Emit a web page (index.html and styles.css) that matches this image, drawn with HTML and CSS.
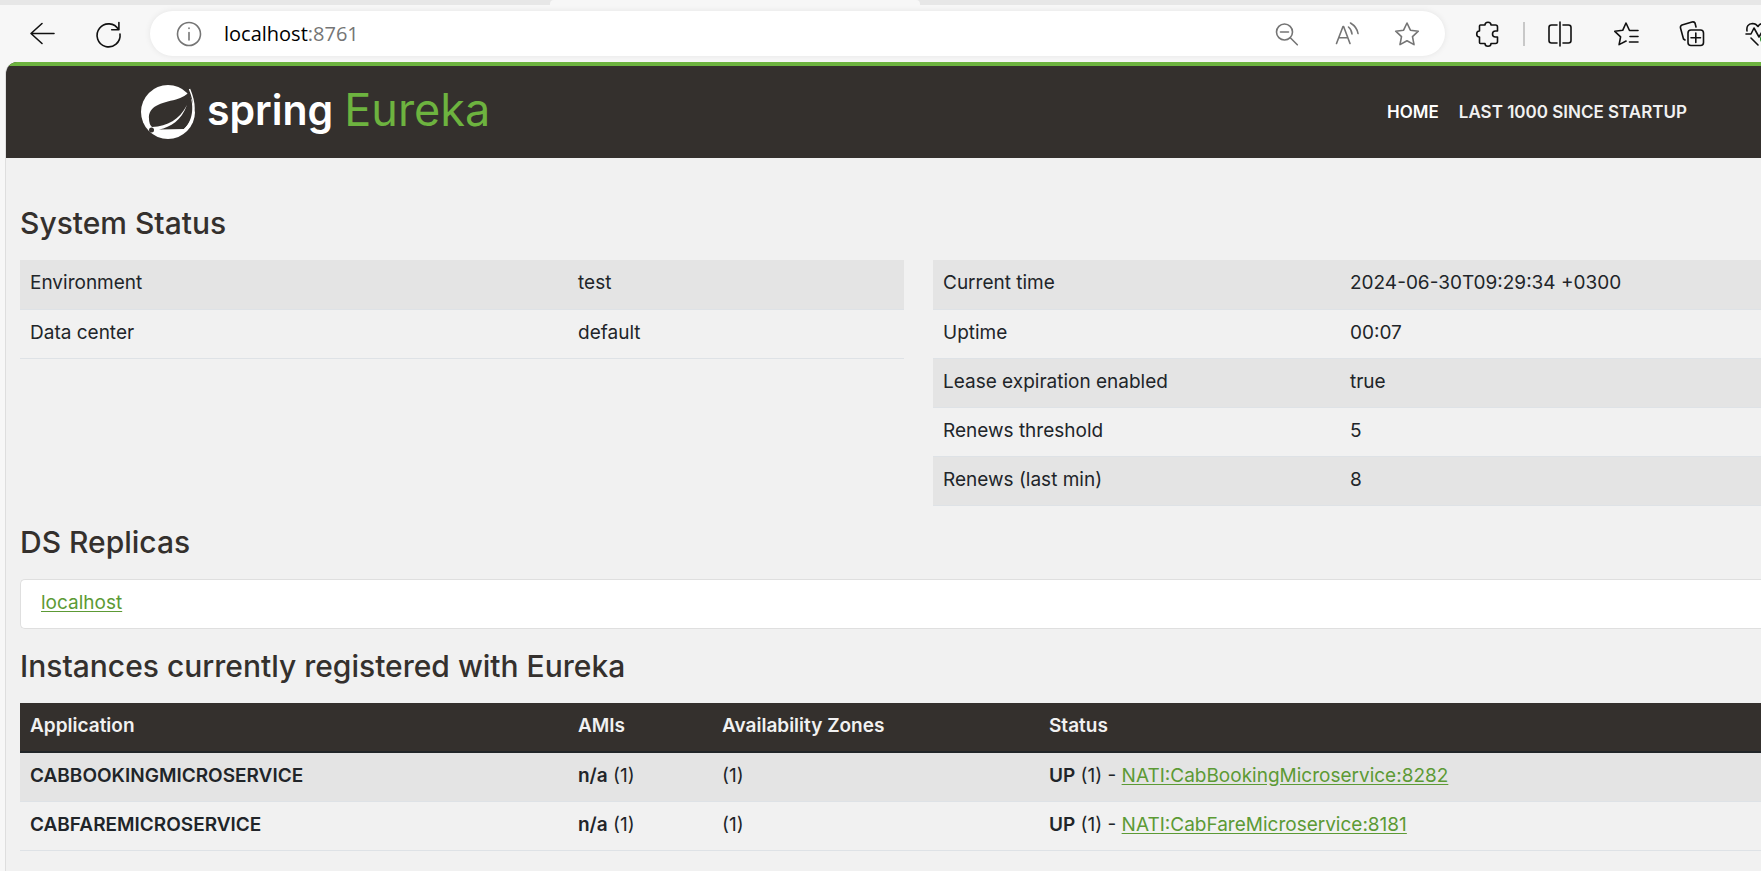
FILE: index.html
```html
<!DOCTYPE html>
<html lang="en">
<head>
<meta charset="utf-8">
<title>Eureka</title>
<link rel="stylesheet" href="styles.css">
</head>
<body>
<div class="tabstrip"><div class="tab"></div></div>
<header class="toolbar">
  <button class="tool" aria-label="Back"><svg width="26" height="26" viewBox="0 0 26 26"><path d="M25 12.500H2M13 2.500 2 12.500l11 10"/></svg></button>
  <button class="tool" aria-label="Refresh"><svg width="26" height="26" viewBox="0 0 26 26"><path d="M23.600 8.700A11.500 11.500 0 1 0 25 13M23.900 1.500v7.200h-7.200"/></svg></button>
  <div class="address">
    <svg width="26" height="26" viewBox="0 0 26 26"><circle cx="13" cy="13" r="11.500"/><path d="M13 11.500v7.500M13 7v.5"/></svg>
    <a class="url" href="#">localhost<span>:8761</span></a>
    <button class="tool" aria-label="Zoom out"><svg width="26" height="26" viewBox="0 0 26 26"><circle cx="10.500" cy="11" r="8"/><path d="M6.500 11h8M16.300 16.800l7 7"/></svg></button>
    <button class="tool" aria-label="Read aloud"><svg width="26" height="26" viewBox="0 0 26 26"><path d="M2.500 22.500 9 5.500h.6L16 22.500M5 16.700h8.800M14.500 6q3 2.500 3.500 7M16.500 2q6.500 4 7.500 10.500"/></svg></button>
    <button class="tool" aria-label="Add to favorites"><svg width="26" height="26" viewBox="0 0 26 26"><path d="m13 2 3.400 7.200 7.900 1-5.800 5.500 1.500 7.900-7-3.900-7 3.900 1.500-7.900-5.800-5.500 7.900-1z"/></svg></button>
  </div>
  <div class="tools">
    <button class="tool" aria-label="Extensions"><svg width="26" height="26" viewBox="0 0 26 26"><path d="M5.500 4H10a3 2.800 0 0 1 6 0h4.500a2 2 0 0 1 2 2v4h-2a3 3 0 0 0 0 6h2v4.500a2 2 0 0 1-2 2H16a3 2.800 0 0 1-6 0H5.500a1 1 0 0 1-1-1V16a2.800 3 0 0 1 0-6V5a1 1 0 0 1 1-1z"/></svg></button>
    <span class="divider"></span>
    <button class="tool" aria-label="Split screen"><svg width="26" height="26" viewBox="0 0 26 26"><path d="M13 1v24M10 4H4.500A2.500 2.500 0 0 0 2 6.500v13A2.500 2.500 0 0 0 4.500 22H10M16 4h5.500A2.500 2.500 0 0 1 24 6.500v13a2.500 2.500 0 0 1-2.500 2.500H16"/></svg></button>
    <button class="tool" aria-label="Favorites"><svg width="26" height="26" viewBox="0 0 26 26"><path d="M25 9.500h-8.500L13 2 9.700 9.300l-7.900 1 5.800 5.600-1.500 7.700 7-3.600M17 15.500h8M16.500 21H25"/></svg></button>
    <button class="tool" aria-label="Collections"><svg width="26" height="26" viewBox="0 0 26 26"><rect x="9" y="9" width="15.500" height="15.500" rx="3"/><path d="M16.800 12v9.500M12 16.800h9.500M6 19l-1.500-1L1.500 7q-.5-2 1.500-3L13 1q2-.5 3 1l1 4"/></svg></button>
    <button class="tool" aria-label="Browser essentials"><svg width="26" height="26" viewBox="0 0 26 26"><path d="M2 10Q1 3 7.500 2.500 11 2.500 13 5.500 15 2.500 18.500 2.500 25 3 24 11M1 13h5l3-6 5 9 3-5h7M6 17l7 7"/><circle class="ok" cx="20" cy="18" r="5"/></svg></button>
  </div>
</header>
<div class="page">
  <nav class="navbar">
    <a class="brand" href="#" aria-label="spring Eureka">
      <svg width="56" height="56" viewBox="0 0 56 56"><circle class="disc" cx="28" cy="28" r="27"/><path class="cut" d="M49 7 58 20 56 33 50 7 46 2z"/><path class="cut" d="M49 8Q45 13 36 15.500C21 19 8 22 9 35Q9 40 12 43C28 42 39 36 47 21 41 37 31 43 19 45.500L44 45C54 36 54 20 49 8z"/><path class="leaf" d="M49.500 5q11 26-5 40.500"/><circle class="cut" cx="11.500" cy="46" r="2.500"/></svg>
      <span class="spring">spring</span><span class="eureka">Eureka</span>
    </a>
    <div class="links"><a class="current" href="#">HOME</a><a href="#">LAST 1000 SINCE STARTUP</a></div>
  </nav>
  <main class="content">
    <h1>System Status</h1>
    <div class="status">
      <table class="grid general">
        <tr><td>Environment</td><td>test</td></tr>
        <tr><td>Data center</td><td>default</td></tr>
      </table>
      <table class="grid runtime">
        <tr><td>Current time</td><td>2024-06-30T09:29:34 +0300</td></tr>
        <tr><td>Uptime</td><td>00:07</td></tr>
        <tr><td>Lease expiration enabled</td><td>true</td></tr>
        <tr><td>Renews threshold</td><td>5</td></tr>
        <tr><td>Renews (last min)</td><td>8</td></tr>
      </table>
    </div>
    <h1>DS Replicas</h1>
    <ul class="replicas"><li><a href="#">localhost</a></li></ul>
    <h1>Instances currently registered with Eureka</h1>
    <table class="grid instances">
      <thead><tr><th>Application</th><th>AMIs</th><th>Availability Zones</th><th>Status</th></tr></thead>
      <tbody>
        <tr><td><b>CABBOOKINGMICROSERVICE</b></td><td><b>n/a</b> (1)</td><td>(1)</td><td><b>UP</b> (1) - <a href="#">NATI:CabBookingMicroservice:8282</a></td></tr>
        <tr><td><b>CABFAREMICROSERVICE</b></td><td><b>n/a</b> (1)</td><td>(1)</td><td><b>UP</b> (1) - <a href="#">NATI:CabFareMicroservice:8181</a></td></tr>
      </tbody>
    </table>
  </main>
</div>
</body>
</html>
```
FILE: styles.css
```css
* { box-sizing: border-box; }
body {
  margin: 0;
  min-height: 100vh;
  display: flex;
  flex-direction: column;
  overflow: hidden;
  background: #f7f7f7;
  color: #212529;
  font: 19px/28px Inter, sans-serif;
}

/* Browser chrome */
.tabstrip { display: flex; height: 5px; background: #e7e7e7; }
.tab { width: 370px; margin-left: 550px; border-radius: 4px 4px 0 0; background: #f7f7f7; }
.toolbar { display: flex; align-items: center; height: 57px; padding-left: 29px; }
.toolbar svg { display: block; flex: none; fill: none; stroke: #111; stroke-width: 1.600; stroke-linecap: round; stroke-linejoin: round; overflow: visible; }
.tool { flex: none; padding: 0; border: 0; background: none; }
.toolbar > .tool { margin-right: 40px; }
.address {
  flex: 1;
  display: flex;
  align-items: center;
  gap: 34px;
  height: 45px;
  margin-left: -11px;
  padding: 0 25px 0 26px;
  border-radius: 23px;
  background: #fff;
  box-shadow: 0 0 6px rgba(0, 0, 0, .08);
}
.toolbar .address svg { stroke: #757575; }
.url { flex: 1; margin-left: -12px; color: #000; font: 20px/28px "Open Sans", sans-serif; text-decoration: none; }
.url span { color: #757575; }
.tools { display: flex; align-items: center; gap: 40px; margin-left: 30px; margin-right: -10px; }
.divider { width: 2px; height: 24px; margin: 0 -18px; background: #c8c8c8; }
.toolbar .ok { fill: #178017; stroke: none; }

/* Page header */
.page {
  flex: 1;
  margin-left: 5px;
  border-left: 1px solid #dedede;
  border-top-left-radius: 12px;
  overflow: hidden;
  background: #f1f1f1;
}
.navbar {
  display: flex;
  align-items: center;
  justify-content: space-between;
  height: 96px;
  padding: 0 74px 0 134px;
  border-top: 4px solid #6db33f;
  background: #34302d;
}
.brand { display: flex; align-items: center; text-decoration: none; font: 45px/56px Inter, sans-serif; }
.disc { fill: #fff; }
.cut { fill: #34302d; }
.leaf { fill: none; stroke: #fff; stroke-width: 1.500; }
.spring { margin-left: 11px; padding-bottom: 4px; color: #fff; font-size: 41px; font-weight: 600; }
.eureka { margin-left: 11px; padding-bottom: 4px; color: #6db33f; }
.links { display: flex; gap: 20px; font: 600 17px/24px Inter, sans-serif; }
.links a { color: #f1f1f1; text-decoration: none; }
.links .current { color: #fff; }

/* Content */
.content { padding: 48px 0 20px 14px; }
h1 { margin: 0 0 20px; color: #34302d; font: 500 30px/34px Inter, sans-serif; }
.status { display: grid; grid-template-columns: 884px 1fr; gap: 29px; align-items: start; margin-bottom: 19px; }
.grid { width: 100%; border-collapse: collapse; table-layout: fixed; }
.grid td, .grid th { height: 49px; padding: 9px 10px 11px; border-bottom: 1px solid #dee2e6; text-align: left; }
.grid tr:nth-child(odd) td { background: #e4e4e4; }
.general td:first-child { width: 62%; }
.runtime td:first-child { width: 407px; }
a { color: #5c9a35; text-underline-offset: 2px; }
.replicas { margin: 0 0 20px; padding: 9px 20px 11px; border: 1px solid #dfdfdf; border-right: 0; border-radius: 5px 0 0 5px; background: #fff; list-style: none; }
.instances th { border-bottom: 2px solid #212529; background: #34302d; color: #f1f1f1; }
.instances th:nth-child(1) { width: 548px; }
.instances th:nth-child(2) { width: 144px; }
.instances th:nth-child(3) { width: 327px; }
b, th { font-weight: 600; }
```
